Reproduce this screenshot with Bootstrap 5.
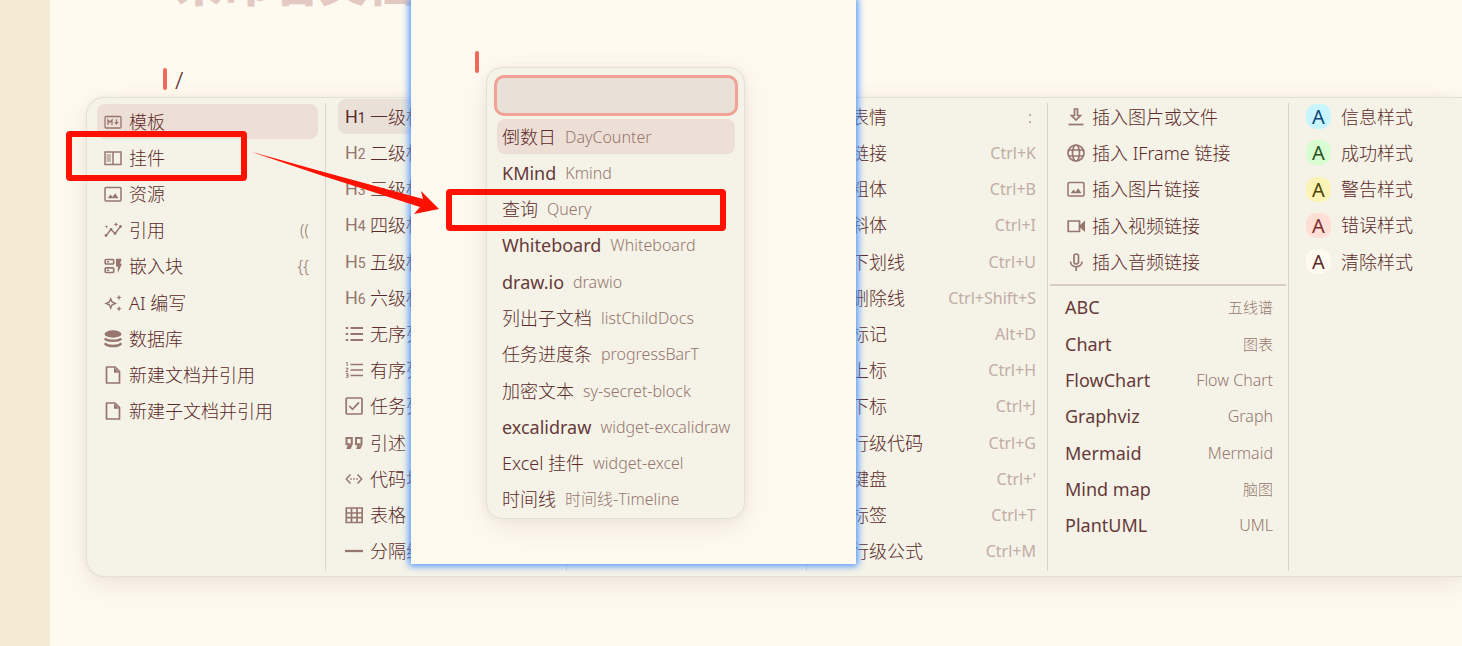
<!DOCTYPE html>
<html lang="zh-CN">
<head>
<meta charset="utf-8">
<meta name="viewport" content="width=device-width, initial-scale=1">
<title>未命名文档</title>
<link href="https://cdn.jsdelivr.net/npm/bootstrap@5.3.0/dist/css/bootstrap.min.css" rel="stylesheet">
<style>
  :root { --paper:#fffaef; --panel:#f5f3e7; --ink:#5c2a2a; --soft:#96766f; --faint:#c2aca5; --line:#d9d4c8; --sel:#eddfd5; --mark:#ff1100; }
  body { background:var(--paper); color:var(--ink); font-family:"Noto Sans","Noto Sans CJK SC",sans-serif; font-size:18px; line-height:24px; font-weight:300; overflow:hidden; }
  .gutter { width:50px; background:#f5ead4; }
  .doc-title { margin:-47px 0 47px 125px; font-size:48px; line-height:60px; font-weight:900; color:#e3c9c1; }
  .prompt-line { height:37px; padding:8px 0 0 113px; gap:8px; font-size:24px; }
  .caret { width:4px; height:22px; border-radius:2px; background:#ee6a5d; flex:none; }
  .popup { background:var(--panel); border:1px solid #e3e0d4; box-shadow:0 8px 28px rgba(92,42,42,.1), 0 0 8px rgba(92,42,42,.04); }
  .slash-menu { display:grid; grid-template-columns:238px 241px 240px 241px 241px 1fr; margin-left:36px; border-right:0; border-radius:18px 0 0 18px; padding:1px 0 7px; }
  .menu-col { position:relative; padding:0 11px 0 13px; }
  .menu-col + .menu-col::before { content:""; position:absolute; left:0; top:4px; bottom:-2px; width:1px; background:var(--line); }
  .first-col { padding:5px 7px 0 10px; }
  .rows { display:grid; grid-template-rows:repeat(13,1fr); height:470px; row-gap:1px; }
  .rows-short { grid-template-rows:repeat(9,1fr); height:325px; }
  .rows-split { grid-template-rows:repeat(5,1fr) 8px repeat(7,1fr); height:444px; margin-right:-4px; }
  .rows hr { margin:3px -5px 3px -10px; border:0; border-top:2px solid #d9cdc3; opacity:1; }
  .item { display:flex; align-items:center; gap:7px; width:100%; min-width:0; border:0; background:none; padding:0 7px; border-radius:8px; color:inherit; font-weight:300; text-align:left; white-space:nowrap; }
  .item svg { width:18px; height:18px; flex:none; fill:none; stroke:var(--soft); stroke-width:1.7; }
  .item svg .solid { fill:var(--soft); stroke:none; }
  .item.active { background:var(--sel); }
  .item.hovered { background:#e9e1d8; }
  .item.latin { font-weight:400; color:#673a39; }
  .item .level { width:18px; flex:none; color:var(--soft); font:400 18px/20px Roboto,sans-serif; }
  .item .level sub { font-size:14px; bottom:0; }
  .item.hovered .level { color:var(--ink); }
  .hint { margin-left:auto; font-size:16px; font-weight:300; color:var(--soft); }
  .hint-cjk { font-size:15px; }
  .item .key { color:var(--faint); font-weight:400; }
  .text-item { padding:0 8px 0 5px; }
  .shift { padding-left:32px; padding-right:0; }
  .paren { padding-right:2px; }
  .swatch { width:25px; height:25px; border-radius:10px; text-align:center; font-size:20px; line-height:25px; font-weight:400; flex:none; }
  .style-item { gap:10px; padding-left:5px; }
  .shot { left:411px; top:0; width:445px; height:564px; padding-left:64px; background:var(--paper); box-shadow:0 0 7px 2px #4b93ff; }
  .shot .caret { margin-top:51px; }
  .widget-menu { width:259px; height:452px; margin:67px 0 0 7px; padding:7px; border-radius:16px; }
  .widget-menu input { display:block; width:244px; height:41px; border:3px solid #f2a195; border-radius:10px; background:#e9e1d8; padding:4px 8px; color:inherit; outline:0; }
  .widget-rows { display:grid; grid-template-rows:repeat(11,1fr); row-gap:1px; height:398px; margin:3px 2px 0 3px; }
  .widget-rows .item { gap:9px; padding:0 5px; }
  .widget-rows .hint { margin-left:0; }
  .frame { border:6px solid var(--mark); border-radius:4px; pointer-events:none; }
  .frame-source { left:66px; top:131px; width:181px; height:50px; }
  .frame-target { left:446px; top:189px; width:280px; height:42px; }
  .arrow { left:252px; top:150px; width:190px; height:66px; fill:var(--mark); pointer-events:none; }
</style>
</head>
<body>
<div class="position-relative d-flex min-vh-100 overflow-hidden">
  <aside class="gutter flex-shrink-0"></aside>
  <main class="flex-grow-1">
    <h1 class="doc-title">未命名文档</h1>
    <div class="prompt-line d-flex mb-0"><span class="caret"></span><span>/</span></div>

    <nav class="slash-menu popup" aria-label="插入">
      <div class="menu-col first-col">
        <div class="rows rows-short">
          <button class="item active"><svg viewBox="0 0 18 18"><rect x="1" y="3.500" width="16" height="11.500" rx="1" stroke-width="1.300"/><path d="M4 12V7l2 2.300L8 7v5M12.500 6.300V10" stroke-width="1.300"/><path class="solid" d="M10.200 9h4.600l-2.300 3z"/></svg>模板</button>
          <button class="item"><svg viewBox="0 0 18 18"><path d="M1 3h16v12.500H1zM9 3v12.500" stroke-width="1.500"/><path d="M2.500 6h4.500M2.500 8h4.500M2.500 10h4.500M2.500 12h4.500" stroke-width="1.100"/></svg>挂件</button>
          <button class="item"><svg viewBox="0 0 18 18"><rect x="1" y="2.500" width="16" height="13.500" rx="1" stroke-width="1.500"/><path class="solid" d="M3.700 13.300 6.500 9.600l2 2.300 2.700-3.600 3.300 5z"/></svg>资源</button>
          <button class="item"><svg viewBox="0 0 18 18"><path d="M2 14.500 7 8.500l4 4 5.500-7" stroke-width="1.400"/><g class="solid"><circle cx="2" cy="14.500" r="1.400"/><circle cx="7" cy="8.500" r="1.400"/><circle cx="11" cy="12.500" r="1.400"/><circle cx="16.500" cy="5.500" r="1.400"/><path d="m12 1 .7 1.700 1.700.7-1.700.7L12 5.800l-.7-1.700-1.700-.7 1.700-.7zM2.500 4l.5 1.200 1.200.5-1.200.5-.5 1.200L2 6.200.8 5.700 2 5.200z"/></g></svg>引用<span class="hint paren">((</span></button>
          <button class="item"><svg viewBox="0 0 18 18"><rect x="1.200" y="2.500" width="8.500" height="4.500" rx="1"/><rect x="1.200" y="10.800" width="8.500" height="4.700" rx="1"/><path class="solid" d="M3 4h2v1.500H3zM3 12.400h2v1.500H3zM12 1.800h5.500l-1.300 5h1.800L13.800 16V9.500H12z"/></svg>嵌入块<span class="hint paren">{{</span></button>
          <button class="item"><svg viewBox="0 0 18 18"><path d="m6.700 4.800 1.400 3.200 3.300 1.400-3.300 1.400-1.400 3.300-1.400-3.300L2 9.400 5.300 8z" stroke-width="1.400"/><path class="solid" d="m15 .8.8 1.900 1.900.8-1.900.8-.8 1.900-.8-1.900-1.900-.8 1.900-.8zM15 12l.8 1.900 1.900.8-1.900.8-.8 1.900-.8-1.900-1.900-.8 1.900-.8z"/></svg>AI 编写</button>
          <button class="item"><svg viewBox="0 0 18 18"><ellipse class="solid" cx="9" cy="4" rx="8.500" ry="3.700"/><path d="M.8 8.500C3 11.500 15 11.500 17.200 8.500M.8 13.200c2.200 3.800 14.200 3.800 16.400 0" stroke-width="2.400"/></svg>数据库</button>
          <button class="item"><svg viewBox="0 0 18 18"><path d="M2.500 1h8.500l4.500 4.700V17h-13z" stroke-linejoin="round"/><path class="solid" d="M10 1.500v5.300h5z"/></svg>新建文档并引用</button>
          <button class="item"><svg viewBox="0 0 18 18"><path d="M2.500 1h8.500l4.500 4.700V17h-13z" stroke-linejoin="round"/><path class="solid" d="M10 1.500v5.300h5z"/></svg>新建子文档并引用</button>
        </div>
      </div>

      <div class="menu-col">
        <div class="rows">
          <button class="item hovered"><span class="level">H<sub>1</sub></span>一级标题</button>
          <button class="item"><span class="level">H<sub>2</sub></span>二级标题</button>
          <button class="item"><span class="level">H<sub>3</sub></span>三级标题</button>
          <button class="item"><span class="level">H<sub>4</sub></span>四级标题</button>
          <button class="item"><span class="level">H<sub>5</sub></span>五级标题</button>
          <button class="item"><span class="level">H<sub>6</sub></span>六级标题</button>
          <button class="item"><svg viewBox="0 0 18 18"><path d="M5.500 3H18M5.500 9H18M5.500 15H18M.8 3h2.400M.8 9h2.400M.8 15h2.400" stroke-width="2"/></svg>无序列表</button>
          <button class="item"><svg viewBox="0 0 18 18"><path d="M5.500 3.500H18M5.500 9H18M5.500 14.500H18"/><path d="M1 1.500h1.200V5M.8 7.200h2.400L1 10.600h2.400M.8 12.700h2.200v3.600H.8M1.500 14.500H3" stroke-width="1"/></svg>有序列表</button>
          <button class="item"><svg viewBox="0 0 18 18"><rect x="1.200" y="1" width="15.800" height="16" rx="1"/><path d="m4.300 9 3.200 3.300 6.500-7"/></svg>任务列表</button>
          <button class="item"><svg viewBox="0 0 18 18"><path d="M1.500 4h5.300v6L5 14H2.800l1.500-3.800H1.500zM11 4h5.500v6l-1.800 4h-2.200l1.500-3.800h-3z" stroke-width="2"/></svg>引述</button>
          <button class="item"><svg viewBox="0 0 18 18"><path d="M5.500 4.500 1.300 9l4.200 4.500M12.500 4.500 16.700 9l-4.200 4.500" stroke-width="1.500"/><path class="solid" d="M5.300 8.300h1.500v1.500H5.300zM8.300 8.300h1.500v1.500H8.300zM11.300 8.300h1.500v1.500h-1.500z"/></svg>代码块</button>
          <button class="item"><svg viewBox="0 0 18 18"><path d="M1.300 2h15.900v14.500H1.300zM6.500 2v14.500M12 2v14.500M1.300 7h15.900M1.300 11.700h15.900"/></svg>表格</button>
          <button class="item"><svg viewBox="0 0 18 18"><path d="M0 9h18" stroke-width="2.300"/></svg>分隔线</button>
        </div>
      </div>

      <div class="menu-col"></div>

      <div class="menu-col">
        <div class="rows">
          <button class="item shift">表情<span class="hint pe-1">:</span></button>
          <button class="item shift">链接<span class="hint key">Ctrl+K</span></button>
          <button class="item shift">粗体<span class="hint key">Ctrl+B</span></button>
          <button class="item shift">斜体<span class="hint key">Ctrl+I</span></button>
          <button class="item shift">下划线<span class="hint key">Ctrl+U</span></button>
          <button class="item shift">删除线<span class="hint key">Ctrl+Shift+S</span></button>
          <button class="item shift">标记<span class="hint key">Alt+D</span></button>
          <button class="item shift">上标<span class="hint key">Ctrl+H</span></button>
          <button class="item shift">下标<span class="hint key">Ctrl+J</span></button>
          <button class="item shift">行级代码<span class="hint key">Ctrl+G</span></button>
          <button class="item shift">键盘<span class="hint key">Ctrl+'</span></button>
          <button class="item shift">标签<span class="hint key">Ctrl+T</span></button>
          <button class="item shift">行级公式<span class="hint key">Ctrl+M</span></button>
        </div>
      </div>

      <div class="menu-col">
        <div class="rows rows-split">
          <button class="item"><svg viewBox="0 0 18 18"><path d="M7.500 1h3v6.500h3L9 12 4.500 7.500h3z"/><path d="M1.500 16.500h15"/></svg>插入图片或文件</button>
          <button class="item"><svg viewBox="0 0 18 18" stroke-width="1.300"><circle cx="9" cy="9" r="8"/><ellipse cx="9" cy="9" rx="3.500" ry="8"/><path d="M1.500 6h15M1.500 12h15"/></svg>插入 IFrame 链接</button>
          <button class="item"><svg viewBox="0 0 18 18"><rect x="1" y="2.500" width="16" height="13.500" rx="1" stroke-width="1.500"/><path class="solid" d="M3.700 13.300 6.500 9.600l2 2.300 2.700-3.600 3.300 5z"/></svg>插入图片链接</button>
          <button class="item"><svg viewBox="0 0 18 18"><path d="M1.200 4h11.300v10.500H1.200z"/><path class="solid" d="m13 8 5-4.500v11.500l-5-4.500z"/></svg>插入视频链接</button>
          <button class="item"><svg viewBox="0 0 18 18" stroke-width="1.500"><rect x="7" y="1" width="4.500" height="10" rx="2.200"/><path d="M3.500 8.500c0 7 11.500 7 11.500 0M9.200 14v4"/></svg>插入音频链接</button>
          <hr>
          <button class="item latin text-item">ABC<span class="hint hint-cjk">五线谱</span></button>
          <button class="item latin text-item">Chart<span class="hint hint-cjk">图表</span></button>
          <button class="item latin text-item">FlowChart<span class="hint">Flow Chart</span></button>
          <button class="item latin text-item">Graphviz<span class="hint">Graph</span></button>
          <button class="item latin text-item">Mermaid<span class="hint">Mermaid</span></button>
          <button class="item latin text-item">Mind map<span class="hint hint-cjk">脑图</span></button>
          <button class="item latin text-item">PlantUML<span class="hint">UML</span></button>
        </div>
      </div>

      <div class="menu-col">
        <div class="rows">
          <button class="item style-item"><span class="swatch" style="background:#c9f5ff;color:#0d4878">A</span>信息样式</button>
          <button class="item style-item"><span class="swatch" style="background:#d7fdd0;color:#2a501f">A</span>成功样式</button>
          <button class="item style-item"><span class="swatch" style="background:#fbf4b6;color:#4d4506">A</span>警告样式</button>
          <button class="item style-item"><span class="swatch" style="background:#ffded6;color:#7d2d2c">A</span>错误样式</button>
          <button class="item style-item"><span class="swatch" style="background:#fffaef;color:#5c2a2a">A</span>清除样式</button>
        </div>
      </div>
    </nav>
  </main>

  <section class="shot position-absolute d-flex align-items-start">
    <span class="caret"></span>
    <div class="widget-menu popup">
      <input type="text" aria-label="搜索挂件">
      <div class="widget-rows">
        <button class="item active">倒数日<span class="hint">DayCounter</span></button>
        <button class="item latin">KMind<span class="hint">Kmind</span></button>
        <button class="item">查询<span class="hint">Query</span></button>
        <button class="item latin">Whiteboard<span class="hint">Whiteboard</span></button>
        <button class="item latin">draw.io<span class="hint">drawio</span></button>
        <button class="item">列出子文档<span class="hint">listChildDocs</span></button>
        <button class="item">任务进度条<span class="hint">progressBarT</span></button>
        <button class="item">加密文本<span class="hint">sy-secret-block</span></button>
        <button class="item latin">excalidraw<span class="hint">widget-excalidraw</span></button>
        <button class="item">Excel 挂件<span class="hint">widget-excel</span></button>
        <button class="item">时间线<span class="hint">时间线-Timeline</span></button>
      </div>
    </div>
  </section>

  <div class="frame frame-source position-absolute"></div>
  <div class="frame frame-target position-absolute"></div>
  <svg class="arrow position-absolute" viewBox="0 0 190 66"><path d="M0 2 68 21l103 28-2-8 18 18-25 5 6-7L68 25z"/></svg>
</div>
<script src="https://cdn.jsdelivr.net/npm/bootstrap@5.3.0/dist/js/bootstrap.bundle.min.js"></script>
</body>
</html>
